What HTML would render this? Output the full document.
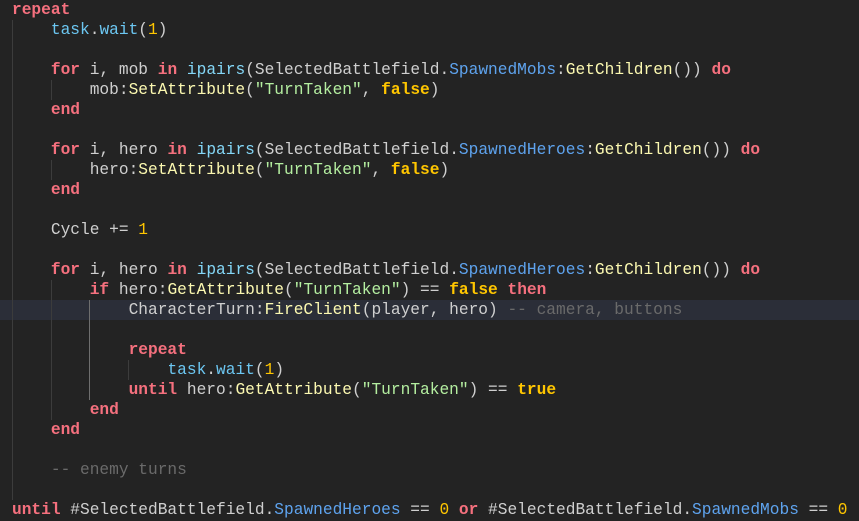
<!DOCTYPE html>
<html><head><meta charset="utf-8"><style>
html,body{margin:0;padding:0;background:#232323;width:859px;height:521px;overflow:hidden}
.c{position:absolute;left:0;top:0;width:859px;font-family:"Liberation Mono",monospace;font-size:16.2px;line-height:20px;color:#cfcfcf}
.l{height:20px;padding-left:12px;white-space:pre}
.k{color:#f5707e;font-weight:bold}
.f{color:#6cc7f2}
.n{color:#ffc600}
.s{color:#b4eea0}
.y{color:#fbf8b0}
.b{color:#5ea3ee}
.p{color:#84d7f7}
.t{color:#ffc600;font-weight:bold}
.m{color:#6a6a6a}
.g{position:absolute;width:1px;background:#3c3c3c}
.hl{position:absolute;left:0;top:300px;width:859px;height:20px;background:#2b2e38}
</style></head><body>
<div class="hl"></div>
<div class="g" style="left:12px;top:20px;height:480px"></div>
<div class="g" style="left:51px;top:80px;height:20px"></div>
<div class="g" style="left:51px;top:160px;height:20px"></div>
<div class="g" style="left:51px;top:280px;height:140px"></div>
<div class="g" style="left:89px;top:300px;height:100px;background:#6e6e6e"></div>
<div class="g" style="left:128px;top:360px;height:20px"></div>
<div class="c">
<div class="l"><span class="k">repeat</span></div>
<div class="l">    <span class="f">task</span>.<span class="f">wait</span>(<span class="n">1</span>)</div>
<div class="l"></div>
<div class="l">    <span class="k">for</span> i, mob <span class="k">in</span> <span class="p">ipairs</span>(SelectedBattlefield.<span class="b">SpawnedMobs</span>:<span class="y">GetChildren</span>()) <span class="k">do</span></div>
<div class="l">        mob:<span class="y">SetAttribute</span>(<span class="s">"TurnTaken"</span>, <span class="t">false</span>)</div>
<div class="l">    <span class="k">end</span></div>
<div class="l"></div>
<div class="l">    <span class="k">for</span> i, hero <span class="k">in</span> <span class="p">ipairs</span>(SelectedBattlefield.<span class="b">SpawnedHeroes</span>:<span class="y">GetChildren</span>()) <span class="k">do</span></div>
<div class="l">        hero:<span class="y">SetAttribute</span>(<span class="s">"TurnTaken"</span>, <span class="t">false</span>)</div>
<div class="l">    <span class="k">end</span></div>
<div class="l"></div>
<div class="l">    Cycle += <span class="n">1</span></div>
<div class="l"></div>
<div class="l">    <span class="k">for</span> i, hero <span class="k">in</span> <span class="p">ipairs</span>(SelectedBattlefield.<span class="b">SpawnedHeroes</span>:<span class="y">GetChildren</span>()) <span class="k">do</span></div>
<div class="l">        <span class="k">if</span> hero:<span class="y">GetAttribute</span>(<span class="s">"TurnTaken"</span>) == <span class="t">false</span> <span class="k">then</span></div>
<div class="l">            CharacterTurn:<span class="y">FireClient</span>(player, hero) <span class="m">-- camera, buttons</span></div>
<div class="l"></div>
<div class="l">            <span class="k">repeat</span></div>
<div class="l">                <span class="f">task</span>.<span class="f">wait</span>(<span class="n">1</span>)</div>
<div class="l">            <span class="k">until</span> hero:<span class="y">GetAttribute</span>(<span class="s">"TurnTaken"</span>) == <span class="t">true</span></div>
<div class="l">        <span class="k">end</span></div>
<div class="l">    <span class="k">end</span></div>
<div class="l"></div>
<div class="l">    <span class="m">-- enemy turns</span></div>
<div class="l"></div>
<div class="l"><span class="k">until</span> #SelectedBattlefield.<span class="b">SpawnedHeroes</span> == <span class="n">0</span> <span class="k">or</span> #SelectedBattlefield.<span class="b">SpawnedMobs</span> == <span class="n">0</span></div>
</div>
</body></html>
